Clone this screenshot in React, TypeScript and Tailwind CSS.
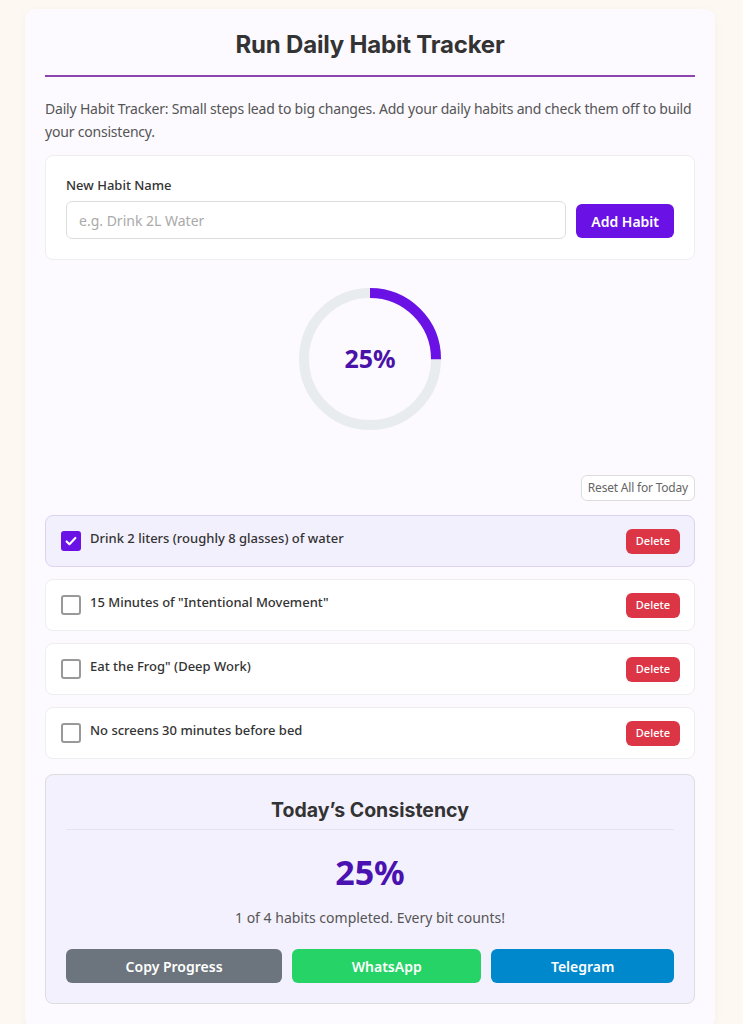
import React, { useState } from 'react';

type Habit = { id: number; name: string; done: boolean };

const initialHabits: Habit[] = [
  { id: 1, name: 'Drink 2 liters (roughly 8 glasses) of water', done: true },
  { id: 2, name: '15 Minutes of "Intentional Movement"', done: false },
  { id: 3, name: 'Eat the Frog" (Deep Work)', done: false },
  { id: 4, name: 'No screens 30 minutes before bed', done: false },
];

const ProgressRing: React.FC<{ percent: number }> = ({ percent }) => {
  const r = 66;
  const c = 2 * Math.PI * r;
  return (
    <div className="relative w-[150px] h-[150px]">
      <svg width="150" height="150" viewBox="0 0 150 150" className="-rotate-90">
        <circle cx="75" cy="75" r={r} fill="none" stroke="#e9ecef" strokeWidth="10" />
        <circle
          cx="75"
          cy="75"
          r={r}
          fill="none"
          stroke="#6a11e6"
          strokeWidth="10"
          strokeDasharray={c}
          strokeDashoffset={c * (1 - percent / 100)}
        />
      </svg>
      <div className="absolute inset-0 flex items-center justify-center text-[25px] font-bold text-[#4a12a8] font-['Noto_Sans',sans-serif]">
        {percent}%
      </div>
    </div>
  );
};

export default function App() {
  const [habits, setHabits] = useState<Habit[]>(initialHabits);
  const [name, setName] = useState('');

  const done = habits.filter((h) => h.done).length;
  const percent = habits.length ? Math.round((done / habits.length) * 100) : 0;

  const toggle = (id: number) =>
    setHabits((hs) => hs.map((h) => (h.id === id ? { ...h, done: !h.done } : h)));
  const remove = (id: number) => setHabits((hs) => hs.filter((h) => h.id !== id));
  const add = () => {
    if (!name.trim()) return;
    setHabits((hs) => [...hs, { id: Date.now(), name: name.trim(), done: false }]);
    setName('');
  };

  return (
    <div className="min-h-screen bg-[#fdf8f2] pt-[9px] pl-[25px] pr-[28px] font-['Noto_Sans',sans-serif]">
      <div className="bg-[#fcfaff] rounded-[10px] shadow-[0_2px_10px_rgba(0,0,0,0.04)] px-5 pt-[20px] pb-6">
        <h1 className="text-center text-[24px] font-bold text-[#333] font-['Inter',sans-serif] pb-[14px] border-b-2 border-[#8e44ad] leading-[32px] tracking-[-0.2px]">
          Run Daily Habit Tracker
        </h1>

        <p className="mt-[20px] text-[14px] leading-[23px] text-[#555] tracking-[-0.2px]">
          Daily Habit Tracker: Small steps lead to big changes. Add your daily habits and check them off to build your consistency.
        </p>

        {/* add habit */}
        <div className="mt-[12px] bg-white border border-[#eee] rounded-lg px-5 pt-[20px] pb-[20px]">
          <label className="block text-[13px] font-medium text-[#333] leading-[18px] mb-[7px]">New Habit Name</label>
          <div className="flex items-end gap-[10px]">
            <input
              value={name}
              onChange={(e) => setName(e.target.value)}
              placeholder="e.g. Drink 2L Water"
              className="flex-1 h-[38px] border border-[#ddd] rounded-md px-3 text-[14px] text-[#333] placeholder:text-[#aaa] outline-none bg-white"
            />
            <button
              onClick={add}
              className="h-[34px] px-[15px] rounded-md bg-[#6a11e6] text-white text-[14px] font-semibold mb-[1px]"
            >
              Add Habit
            </button>
          </div>
        </div>

        {/* ring */}
        <div className="flex justify-center mt-[24px]">
          <ProgressRing percent={percent} />
        </div>

        <div className="flex justify-end mt-[41px]">
          <button
            onClick={() => setHabits((hs) => hs.map((h) => ({ ...h, done: false })))}
            className="h-[26px] px-[6px] border border-[#ddd] rounded-md bg-white text-[12px] text-[#666] tracking-[-0.2px]"
          >
            Reset All for Today
          </button>
        </div>

        {/* habit list */}
        <div className="mt-[14px] flex flex-col gap-[12px]">
          {habits.map((h) => (
            <div
              key={h.id}
              className={`flex items-center justify-between h-[52px] pl-[15px] pr-[14px] rounded-lg border ${
                h.done ? 'bg-[#f3f0fe] border-[#dcd3f0]' : 'bg-white border-[#eee]'
              }`}
            >
              <div className="flex items-center gap-[9px]">
                <button
                  onClick={() => toggle(h.id)}
                  className={`w-[20px] h-[20px] rounded-[3px] flex items-center justify-center ${
                    h.done ? 'bg-[#6a11e6]' : 'bg-white border-2 border-[#999]'
                  }`}
                >
                  {h.done && (
                    <svg width="14" height="14" viewBox="0 0 16 16" fill="none">
                      <path d="M3 8.5l3.2 3.2L13 4.5" stroke="white" strokeWidth="2.4" strokeLinecap="round" strokeLinejoin="round" />
                    </svg>
                  )}
                </button>
                <span className="text-[13px] font-medium text-[#333] -mt-[4px]">{h.name}</span>
              </div>
              <button
                onClick={() => remove(h.id)}
                className="h-[25px] px-[10px] rounded-md bg-[#dc3545] text-white text-[11px] font-medium"
              >
                Delete
              </button>
            </div>
          ))}
        </div>

        {/* summary */}
        <div className="mt-[15px] bg-[#f3f1fd] border border-[#ddd] rounded-lg px-5 pt-[22px] pb-[20px]">
          <h2 className="text-center text-[19.5px] font-bold text-[#333] font-['Inter',sans-serif] leading-[26px] pb-[6px] border-b border-[#e6e4ee]">
            Today’s Consistency
          </h2>
          <div className="text-center text-[34px] font-bold text-[#4a12b0] leading-[40px] mt-[22px]">{percent}%</div>
          <div className="text-center text-[14px] text-[#555] mt-[15px]">
            {done} of {habits.length} habits completed. Every bit counts!
          </div>
          <div className="flex gap-[10px] mt-[21px]">
            <button className="flex-[1_1_auto] h-[34px] rounded-md bg-[#6c757d] text-white text-[14px] font-semibold">
              Copy Progress
            </button>
            <button className="flex-[1_1_auto] h-[34px] rounded-md bg-[#25d366] text-white text-[14px] font-semibold">
              WhatsApp
            </button>
            <button className="flex-[1_1_auto] h-[34px] rounded-md bg-[#0088cc] text-white text-[14px] font-semibold">
              Telegram
            </button>
          </div>
        </div>
      </div>
    </div>
  );
}
